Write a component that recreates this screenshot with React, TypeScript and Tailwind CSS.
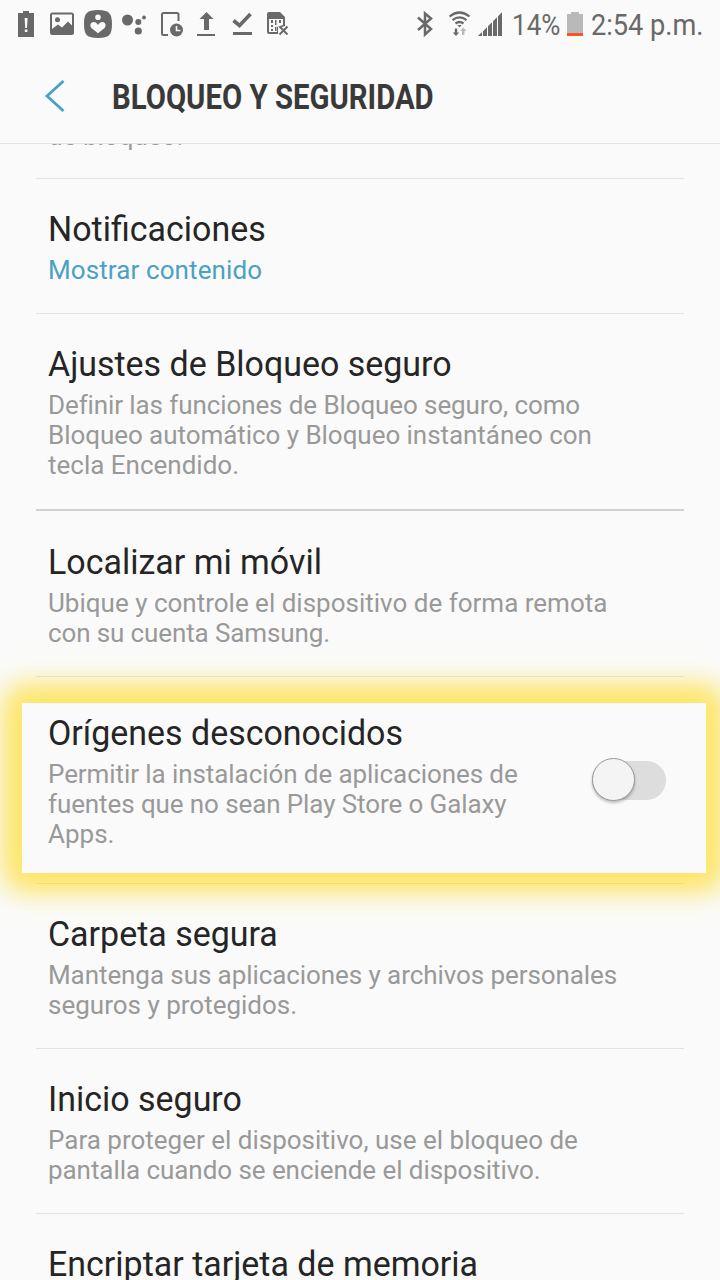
import React from "react";

function StatusIcons() {
  return (
    <svg className="block h-12 w-[300px] shrink-0" viewBox="0 0 300 48" fill="#696969">
      <path fillRule="evenodd" d="M18 13h5v-2h6v2h5v24H18zM24.6 18l.6 10h1.8l.6-10zM24.8 29.5v2.5h2.6v-2.5z" />
      <path fillRule="evenodd" d="M52.500 12.500h19a2.500 2.500 0 0 1 2.500 2.500v17.500a2.500 2.500 0 0 1-2.500 2.500h-19a2.500 2.500 0 0 1-2.500-2.500v-17.500a2.500 2.500 0 0 1 2.500-2.500zM52 14.500v14.500l6-4.500 4 3 6-6 4 4V14.500z" />
      <circle cx="57.500" cy="19.800" r="2.500" />
      <path fillRule="evenodd" d="M98 10c11 0 14 3 14 14s-3 14-14 14-14-3-14-14 3-14 14-14zM98 14.500a2.800 2.800 0 1 0 0 5.600 2.800 2.800 0 0 0 0-5.600zM98 25c-1.500-2.500-3.500-3.500-5.500-2.800-2.500 1-2.800 4-.8 6l6.300 5 6.300-5c2-2 1.700-5-.8-6-2-.7-4 .3-5.500 2.800z" />
      <circle cx="127.500" cy="20" r="5.500" />
      <circle cx="138.300" cy="22" r="3" />
      <circle cx="144" cy="17.500" r="1.900" />
      <circle cx="138.300" cy="31" r="3.600" />
      <path d="M168 35h-4.500q-1.500 0-1.500-1.500V14.500q0-1.500 1.500-1.500H177q1.500 0 1.500 1.500V21" fill="none" stroke="#696969" strokeWidth="2" />
      <circle cx="176.500" cy="30" r="6.500" />
      <path d="M176.500 26v4.500h4" fill="none" stroke="#fafafa" strokeWidth="1.600" />
      <path d="M206.500 12l7 7h-4.500v11h-5V19h-4.500zM197 34h18v2h-18z" />
      <path d="M233.500 20.500l6 5 11-11.500" fill="none" stroke="#696969" strokeWidth="3.600" />
      <path d="M233 32h19v3h-19z" />
      <path fillRule="evenodd" d="M269 12h11l5 5v9l-3 1-4-1v8h-9q-2 0-2-2V14q0-2 2-2zM269 19v13h8v-5l6-2v-6z" />
      <path d="M271 20h2v3h-2zM275 20h1.500v5H275zM279 20h2v3h-2zM271 25h2v2h-2zM271 29h2v2h-2zM275 27h1.500v4H275z" />
      <path d="M279.500 26.500l8 8m0-8l-8 8" fill="none" stroke="#696969" strokeWidth="2" />
    </svg>
  );
}

function ConnectivityIcons() {
  return (
    <svg className="block h-12 w-[88px] shrink-0" viewBox="416 0 88 48" fill="#696969">
      <path d="M418 17.500l13 11.500-6 5.500V13.500l6 5-13 11.500" fill="none" stroke="#696969" strokeWidth="2.500" />
      <g fill="none" stroke="#696969" strokeWidth="2.200">
        <path d="M449.500 16.500q10-8 20 0" />
        <path d="M452.500 20.200q7-5.500 14 0" />
        <path d="M455.500 23.500q4-3 8 0" />
      </g>
      <path d="M457.300 25h4.400l-2.200 2.500z" />
      <path d="M454.800 28.500h2.400v4h2l-3.200 3.500-3.200-3.500h2z" />
      <path fill="#b9b9b9" d="M462 35h2.400v-4h2l-3.200-3.500L460 31h2z" />
      <path d="M478 36l4-4v4zM483 31.200l4-4V36h-4zM488 26.200l4-4V36h-4zM493 21.200l4-4V36h-4zM498 16.200l4-4V36h-4z" />
    </svg>
  );
}

function StatusBar() {
  return (
    <div className="flex h-12 shrink-0 text-[30px] leading-[48px] text-[#696969]">
      <StatusIcons />
      <div className="w-[116px]" />
      <ConnectivityIcons />
      <div className="w-[62px] pl-2">
        <span className="inline-block origin-left scale-x-[0.87] whitespace-nowrap pt-px">14%</span>
      </div>
      <svg className="block h-12 w-[18px] shrink-0" viewBox="566 0 18 48">
        <path d="M567 14h4v-2h8v2h4v22h-16z" fill="#b9b9b9" />
        <path d="M567 33h16v3h-16z" fill="#fc5424" />
      </svg>
      <div className="w-[136px] pl-[7px]">
        <span className="inline-block origin-left scale-x-[0.905] whitespace-nowrap pt-px">2:54 p.m.</span>
      </div>
    </div>
  );
}

function Title({ children }: { children: React.ReactNode }) {
  return <h2 className="mb-[5px] origin-left scale-x-[0.97] text-[35px] leading-10 whitespace-nowrap text-[#252525]">{children}</h2>;
}

type Line = { text: string; tracking?: string };

function Lines({ lines }: { lines: Line[] }) {
  return (
    <>
      {lines.map(({ text, tracking = "" }) => (
        <p key={text} className={`text-[26px] leading-[30px] whitespace-nowrap ${tracking}`}>{text}</p>
      ))}
    </>
  );
}

function Item({ title, lines, accent = false }: { title: string; lines: Line[]; accent?: boolean }) {
  return (
    <div className="px-3 pt-[31px] pb-7">
      <Title>{title}</Title>
      <div className={accent ? "text-[#4ba1c3]" : "text-[#999999]"}>
        <Lines lines={lines} />
      </div>
    </div>
  );
}

function Divider({ strong = false }: { strong?: boolean }) {
  return <div className={strong ? "my-px h-[2px] bg-[#d2d2d2]" : "h-px bg-[#e3e3e3]"} />;
}

export default function App() {
  return (
    <div className="flex h-[1280px] w-[720px] flex-col overflow-hidden bg-[#fafafa] font-['Roboto',sans-serif]">
      <StatusBar />
      <header className="flex h-24 shrink-0 items-center border-b border-[#e3e3e3] pl-[44px]">
        <svg className="block h-10 w-[68px]" viewBox="44 76 68 40" fill="none" stroke="#4ba1c3" strokeWidth="2.800">
          <path d="M63.500 81L47 96l16.500 15" />
        </svg>
        <h1 className="origin-left scale-x-[0.838] pt-1 text-[35px] leading-10 font-bold whitespace-nowrap text-[#393939]">BLOQUEO Y SEGURIDAD</h1>
      </header>
      <main className="min-h-0 flex-1 overflow-hidden px-9">
        <div className="flex h-[34px] flex-col overflow-hidden px-3">
          <p className="-mt-[23px] text-[26px] leading-[30px] text-[#999999]">de bloqueo.</p>
        </div>
        <Divider />
        <Item title="Notificaciones" lines={[{ text: "Mostrar contenido", tracking: "tracking-[0.1px]" }]} accent />
        <Divider />
        <Item
          title="Ajustes de Bloqueo seguro"
          lines={[
            { text: "Definir las funciones de Bloqueo seguro, como", tracking: "tracking-[-0.1px]" },
            { text: "Bloqueo automático y Bloqueo instantáneo con", tracking: "tracking-[-0.05px]" },
            { text: "tecla Encendido." },
          ]}
        />
        <Divider strong />
        <Item
          title="Localizar mi móvil"
          lines={[
            { text: "Ubique y controle el dispositivo de forma remota" },
            { text: "con su cuenta Samsung.", tracking: "tracking-[-0.12px]" },
          ]}
        />
        <Divider />
        <div className="relative h-[206px]">
          <div className="absolute top-[26px] -right-[22px] -left-[14px] h-[170px] bg-[#fafafa] shadow-[0_0_28px_12px_#fde66a,0_0_28px_12px_#fde66a]" />
          <div className="relative flex items-start justify-between px-3 pt-[37px]">
            <div className="text-[#999999]">
              <Title>Orígenes desconocidos</Title>
              <Lines
                lines={[
                  { text: "Permitir la instalación de aplicaciones de", tracking: "tracking-[-0.08px]" },
                  { text: "fuentes que no sean Play Store o Galaxy", tracking: "tracking-[-0.1px]" },
                  { text: "Apps." },
                ]}
              />
            </div>
            <button role="switch" aria-checked="false" aria-label="Orígenes desconocidos" className="mt-[47px] mr-[6px] flex h-[39px] w-[74px] items-start rounded-full bg-[#dddddd]">
              <span className="-mt-[3px] block size-[43px] shrink-0 rounded-full border border-[#999999] bg-[#f4f4f4] shadow-[0_2px_3px_#00000040]" />
            </button>
          </div>
        </div>
        <div className="relative h-px bg-[#f4df69]" />
        <Item
          title="Carpeta segura"
          lines={[
            { text: "Mantenga sus aplicaciones y archivos personales", tracking: "tracking-[-0.08px]" },
            { text: "seguros y protegidos." },
          ]}
        />
        <Divider />
        <Item
          title="Inicio seguro"
          lines={[
            { text: "Para proteger el dispositivo, use el bloqueo de" },
            { text: "pantalla cuando se enciende el dispositivo.", tracking: "tracking-[-0.06px]" },
          ]}
        />
        <Divider />
        <Item title="Encriptar tarjeta de memoria" lines={[]} />
      </main>
    </div>
  );
}
